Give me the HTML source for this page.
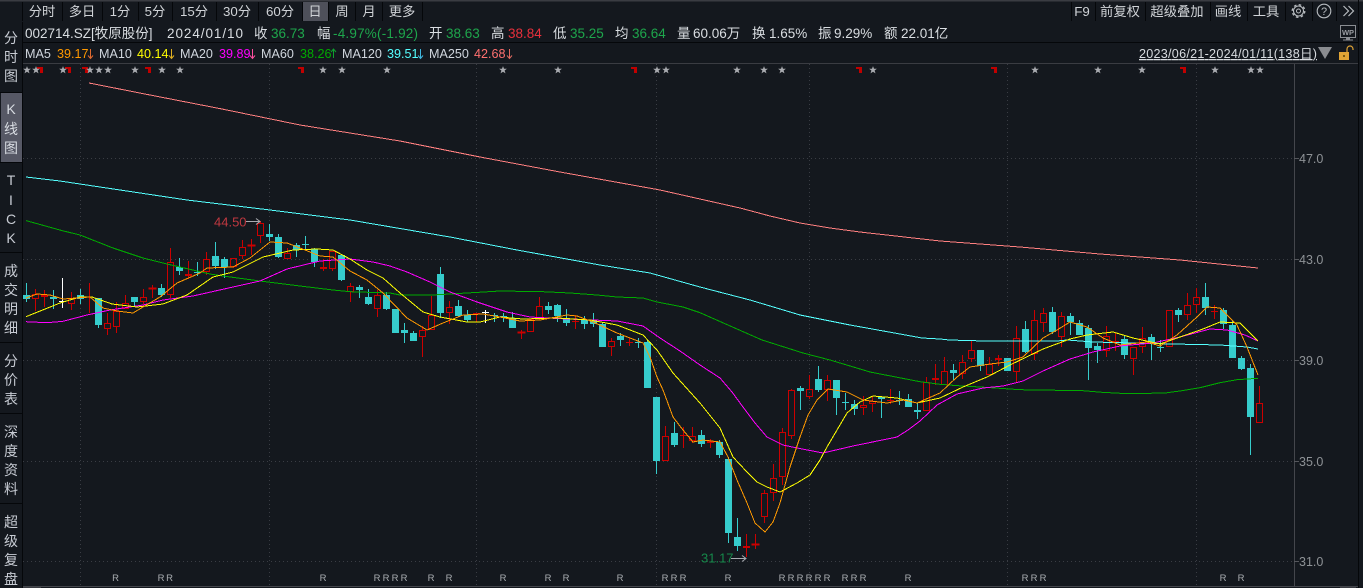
<!DOCTYPE html>
<html lang="zh"><head><meta charset="utf-8"><title>002714.SZ 牧原股份</title>
<style>
html,body{margin:0;padding:0;width:1363px;height:588px;background:#14181e;overflow:hidden}
svg{display:block;font-family:"Liberation Sans","Noto Sans CJK SC",sans-serif}
.t{font-size:13.3px;fill:#d0d3d7;text-anchor:middle}
.i{font-size:13.5px;fill:#dadee2}
.m{font-size:12.6px;fill:#d0d6de}
.g{fill:#1ea64c}.r{fill:#e8303c}
.s{font-size:14px;fill:#c8ccd4;text-anchor:middle}
.R{font-size:9.5px;fill:#a8acb0;text-anchor:middle}
.a{font-size:12.5px;fill:#8e9296}
.l{fill:none;stroke-width:1;shape-rendering:crispEdges}
</style></head><body>
<svg width="1363" height="588" viewBox="0 0 1363 588" xmlns="http://www.w3.org/2000/svg">
<defs>
<polygon id="st" points="0,-3.9 1,-1.2 3.9,-1.2 1.6,.5 2.5,3.4 0,1.7 -2.5,3.4 -1.6,.5 -3.9,-1.2 -1,-1.2" fill="#a9abb0"/>
<path id="co" d="M-3 -3h6v6h-3v-4h-3z" fill="#c00000"/>
</defs>
<rect width="1363" height="588" fill="#14181e"/>

<!-- tab bar -->
<rect x="302" y="2" width="26" height="19" fill="#4e505a"/>
<rect x="0" y="0" width="1363" height="1.5" fill="#3a3c42"/>
<path d="M22.5 2V21M62.5 2V21M102.5 2V21M138.5 2V21M172.5 2V21M216.5 2V21M258.5 2V21M302.5 2V21M328.5 2V21M355.5 2V21M382.5 2V21M422.5 2V21M1071.5 2V21M1095.5 2V21M1145.5 2V21M1210.5 2V21M1247.5 2V21M1285.5 2V21M1312.5 2V21M1336.5 2V21" stroke="#05070a" fill="none"/>
<text class="t" x="42" y="16">分时</text><text class="t" x="82" y="16">多日</text><text class="t" x="120" y="16">1分</text><text class="t" x="155" y="16">5分</text><text class="t" x="194" y="16">15分</text><text class="t" x="237" y="16">30分</text><text class="t" x="280" y="16">60分</text><text class="t" x="315" y="16">日</text><text class="t" x="342" y="16">周</text><text class="t" x="369" y="16">月</text><text class="t" x="402" y="16">更多</text>
<text class="t" x="1082" y="16">F9</text><text class="t" x="1120" y="16">前复权</text><text class="t" x="1177" y="16">超级叠加</text><text class="t" x="1228" y="16">画线</text><text class="t" x="1266" y="16">工具</text>
<!-- gear -->
<circle cx="1298.5" cy="11" r="5" fill="none" stroke="#b8bcc0" stroke-width="1.1"/><circle cx="1298.5" cy="11" r="2" fill="none" stroke="#b8bcc0"/><circle cx="1298.5" cy="11" r="6.3" fill="none" stroke="#b8bcc0" stroke-width="1.3" stroke-dasharray="2.6 2.35"/>
<!-- help -->
<circle cx="1324" cy="11" r="6.8" fill="none" stroke="#b8bcc0" stroke-width="1.1"/><text x="1324" y="15" font-size="11" fill="#b8bcc0" text-anchor="middle">?</text>
<!-- chevrons -->
<path d="M1343.5 6l5 5-5 5M1348.5 6l5 5-5 5" fill="none" stroke="#b8bcc0" stroke-width="1.2"/>
<!-- WP -->
<path d="M1340.5 25.5h15v12h-15z" fill="none" stroke="#8a8d92"/><text x="1348" y="35" font-size="7.5" font-weight="bold" fill="#9a9da2" text-anchor="middle">WP</text><path d="M1346 38h4v1.5h-4zM1343 39.5h10v1h-10z" fill="#8a8d92"/>

<!-- info row -->
<text class="i" x="25" y="38">002714.SZ[牧原股份]</text><text class="i" x="167" y="38" textLength="76" lengthAdjust="spacing">2024/01/10</text>
<text class="i" x="254" y="38">收</text><text class="i g" x="271" y="38">36.73</text>
<text class="i" x="317" y="38">幅</text><text class="i g" x="333" y="38" textLength="85" lengthAdjust="spacing">-4.97%(-1.92)</text>
<text class="i" x="429" y="38">开</text><text class="i g" x="446" y="38">38.63</text>
<text class="i" x="491" y="38">高</text><text class="i r" x="508" y="38">38.84</text>
<text class="i" x="553" y="38">低</text><text class="i g" x="570" y="38">35.25</text>
<text class="i" x="615" y="38">均</text><text class="i g" x="632" y="38">36.64</text>
<text class="i" x="677" y="38">量</text><text class="i" x="693" y="38">60.06万</text>
<text class="i" x="752" y="38">换</text><text class="i" x="769" y="38">1.65%</text>
<text class="i" x="818" y="38">振</text><text class="i" x="834" y="38">9.29%</text>
<text class="i" x="884" y="38">额</text><text class="i" x="901" y="38">22.01亿</text>
<rect x="23" y="42" width="1336" height="1" fill="#05070a"/>

<!-- MA row -->
<text class="m" x="25" y="58">MA5</text><text class="m" x="57" y="58" style="fill:#ff9900">39.17</text>
<text class="m" x="99" y="58">MA10</text><text class="m" x="137" y="58" style="fill:#ffff00">40.14</text>
<text class="m" x="180" y="58">MA20</text><text class="m" x="219" y="58" style="fill:#ff00ff">39.89</text>
<text class="m" x="261" y="58">MA60</text><text class="m" x="300" y="58" style="fill:#00aa00">38.26</text>
<text class="m" x="342" y="58">MA120</text><text class="m" x="387" y="58" style="fill:#55ffff">39.51</text>
<text class="m" x="429" y="58">MA250</text><text class="m" x="474" y="58" style="fill:#ff7070">42.68</text>
<g fill="none" stroke-width="1">
<path d="M90.5 49v9M88 55.5l2.5 3 2.5-3" stroke="#e06a30"/>
<path d="M171.5 49v9M169 55.5l2.5 3 2.5-3" stroke="#e0b020"/>
<path d="M252.5 49v9M250 55.5l2.5 3 2.5-3" stroke="#ff50a0"/>
<path d="M333.5 49v9M331 52l2.5-3 2.5 3" stroke="#10a030"/>
<path d="M420.5 49v9M418 55.5l2.5 3 2.5-3" stroke="#40b8e0"/>
<path d="M509.5 49v9M507 55.5l2.5 3 2.5-3" stroke="#e06a60"/>
</g>
<text class="m" x="1139" y="58" textLength="178" lengthAdjust="spacing" style="fill:#d8dce0;text-decoration:underline">2023/06/21-2024/01/11(138日)</text>
<path d="M1318 47h14l-7 12z" fill="#8a8c90"/>
<rect x="1339" y="52" width="10" height="8" fill="#e0a435"/><rect x="1343" y="55" width="2" height="2" fill="#7a5a10"/>
<path d="M1347 52v-3a3 3 0 0 1 6 0v1" fill="none" stroke="#e0a435" stroke-width="1.2"/>
<rect x="23" y="63" width="1336" height="1" fill="#3a3c42"/>

<!-- sidebar -->
<rect x="0" y="22" width="22" height="566" fill="#14181e"/>
<rect x="1" y="92" width="21" height="70" fill="#565865"/>
<rect x="22" y="22" width="1" height="566" fill="#05070a"/>
<path d="M0 92.5h22M0 162.5h22M0 252.5h22M0 342.5h22M0 413.5h22M0 503.5h22" stroke="#05070a"/>
<g>
<text class="s" x="11" y="43">分</text><text class="s" x="11" y="62">时</text><text class="s" x="11" y="81">图</text>
<text class="s" x="11" y="114" style="fill:#d8dce2">K</text><text class="s" x="11" y="134" style="fill:#d8dce2">线</text><text class="s" x="11" y="153" style="fill:#d8dce2">图</text>
<text class="s" x="11" y="185">T</text><text class="s" x="11" y="205">I</text><text class="s" x="11" y="224">C</text><text class="s" x="11" y="243">K</text>
<text class="s" x="11" y="276">成</text><text class="s" x="11" y="295">交</text><text class="s" x="11" y="314">明</text><text class="s" x="11" y="333">细</text>
<text class="s" x="11" y="366">分</text><text class="s" x="11" y="385">价</text><text class="s" x="11" y="404">表</text>
<text class="s" x="11" y="437">深</text><text class="s" x="11" y="456">度</text><text class="s" x="11" y="475">资</text><text class="s" x="11" y="494">料</text>
<text class="s" x="11" y="527">超</text><text class="s" x="11" y="546">级</text><text class="s" x="11" y="565">复</text><text class="s" x="11" y="584">盘</text>
</g>

<!-- grid -->
<path d="M23 158.5H1294M23 259.5H1294M23 360.5H1294M23 461.5H1294M23 561.5H1294M80.5 64V586M269.5 64V586M476.5 64V586M656.5 64V586M809.5 64V586M1007.5 64V586M1196.5 64V586" stroke="#3a3d44" stroke-dasharray="1 3" fill="none" shape-rendering="crispEdges"/>
<rect x="1294" y="64" width="1" height="522" fill="#44464c"/>
<rect x="23" y="586" width="1336" height="1" fill="#44464c"/>
<rect x="23" y="587" width="18" height="1" fill="#3a3c42"/><rect x="1340" y="587" width="16" height="1" fill="#3a3c42"/>
<rect x="1358" y="0" width="1" height="588" fill="#05070a"/>
<path d="M1294 158.5h5M1294 259.5h5M1294 360.5h5M1294 461.5h5M1294 561.5h5" stroke="#55575c"/>
<text class="a" x="1299" y="163">47.0</text><text class="a" x="1299" y="264">43.0</text><text class="a" x="1299" y="365">39.0</text><text class="a" x="1299" y="466">35.0</text><text class="a" x="1299" y="566">31.0</text>

<!-- corners -->
<use href="#co" x="40" y="70"/><use href="#co" x="68" y="70"/><use href="#co" x="85" y="70"/><use href="#co" x="148" y="70"/><use href="#co" x="301" y="70"/><use href="#co" x="634" y="70"/><use href="#co" x="859" y="70"/><use href="#co" x="994" y="70"/><use href="#co" x="1183" y="70"/>
<!-- stars -->
<use href="#st" x="27" y="70"/><use href="#st" x="36" y="70"/><use href="#st" x="63" y="70"/><use href="#st" x="90" y="70"/><use href="#st" x="99" y="70"/><use href="#st" x="108" y="70"/><use href="#st" x="135" y="70"/><use href="#st" x="162" y="70"/><use href="#st" x="180" y="70"/><use href="#st" x="323" y="70"/><use href="#st" x="342" y="70"/><use href="#st" x="387" y="70"/><use href="#st" x="503" y="70"/><use href="#st" x="558" y="70"/><use href="#st" x="657" y="70"/><use href="#st" x="666" y="70"/><use href="#st" x="737" y="70"/><use href="#st" x="764" y="70"/><use href="#st" x="782" y="70"/><use href="#st" x="873" y="70"/><use href="#st" x="1035" y="70"/><use href="#st" x="1098" y="70"/><use href="#st" x="1142" y="70"/><use href="#st" x="1215" y="70"/><use href="#st" x="1251" y="70"/><use href="#st" x="1260" y="70"/>

<!-- R row -->
<g>
<text class="R" x="115.5" y="581">R</text><text class="R" x="161" y="581">R</text><text class="R" x="169.5" y="581">R</text><text class="R" x="323" y="581">R</text><text class="R" x="377" y="581">R</text><text class="R" x="386" y="581">R</text><text class="R" x="395" y="581">R</text><text class="R" x="404" y="581">R</text><text class="R" x="431" y="581">R</text><text class="R" x="449" y="581">R</text><text class="R" x="503" y="581">R</text><text class="R" x="548" y="581">R</text><text class="R" x="566" y="581">R</text><text class="R" x="620" y="581">R</text><text class="R" x="665" y="581">R</text><text class="R" x="674" y="581">R</text><text class="R" x="683" y="581">R</text><text class="R" x="728" y="581">R</text><text class="R" x="782" y="581">R</text><text class="R" x="791" y="581">R</text><text class="R" x="800" y="581">R</text><text class="R" x="809" y="581">R</text><text class="R" x="818" y="581">R</text><text class="R" x="827" y="581">R</text><text class="R" x="845" y="581">R</text><text class="R" x="854" y="581">R</text><text class="R" x="863" y="581">R</text><text class="R" x="908" y="581">R</text><text class="R" x="1025" y="581">R</text><text class="R" x="1034" y="581">R</text><text class="R" x="1043" y="581">R</text><text class="R" x="1223" y="581">R</text><text class="R" x="1241" y="581">R</text>
</g>

<!-- cyan candles -->
<path shape-rendering="crispEdges" fill="#36cccc" stroke="#36cccc" d="M26.5 283V302M23.5 295.5h6V298.5h-6zM53.5 290V309M50.5 297.5h6V298.5h-6zM80.5 289V304M77.5 295.5h6V298.5h-6zM98.5 298V328M95.5 298.5h6V324.5h-6zM134.5 297V307M131.5 297.5h6V301.5h-6zM161.5 284V297M158.5 288.5h6V294.5h-6zM179.5 258V275M176.5 267.5h6V270.5h-6zM197.5 262V276M194 272.5h7M215.5 242V269M212.5 256.5h6V265.5h-6zM224.5 257V278M221.5 259.5h6V266.5h-6zM269.5 224V241M266.5 234.5h6V236.5h-6zM278.5 234V258M275.5 237.5h6V256.5h-6zM296.5 243V257M293.5 245.5h6V249.5h-6zM305.5 236V249M302 244.5h7M314.5 248V267M311.5 249.5h6V261.5h-6zM341.5 255V281M338.5 255.5h6V279.5h-6zM359.5 285V298M356.5 287.5h6V289.5h-6zM368.5 289V305M365.5 297.5h6V303.5h-6zM386.5 292V310M383.5 295.5h6V308.5h-6zM395.5 309V333M392.5 309.5h6V332.5h-6zM404.5 323V343M401.5 330.5h6V332.5h-6zM413.5 331V341M410.5 333.5h6V340.5h-6zM440.5 267V318M437.5 274.5h6V312.5h-6zM458.5 300V317M455.5 306.5h6V315.5h-6zM467.5 310V322M464.5 315.5h6V319.5h-6zM494.5 313V322M491 315.5h7M503.5 313V322M500 316.5h7M512.5 312V328M509.5 318.5h6V327.5h-6zM548.5 302V314M545.5 306.5h6V309.5h-6zM557.5 304V322M554.5 305.5h6V315.5h-6zM566.5 309V326M563.5 318.5h6V322.5h-6zM584.5 316V329M581.5 320.5h6V323.5h-6zM593.5 313V327M590.5 321.5h6V323.5h-6zM602.5 322V347M599.5 324.5h6V346.5h-6zM620.5 333V346M617.5 336.5h6V339.5h-6zM638.5 338V348M635 342.5h7M647.5 340V388M644.5 342.5h6V387.5h-6zM656.5 397V474M653.5 397.5h6V460.5h-6zM674.5 422V447M671.5 433.5h6V444.5h-6zM701.5 430V447M698.5 435.5h6V443.5h-6zM719.5 440V458M716.5 442.5h6V454.5h-6zM728.5 457V543M725.5 459.5h6V532.5h-6zM737.5 518V551M734.5 537.5h6V545.5h-6zM800.5 386V410M797.5 388.5h6V390.5h-6zM818.5 366V392M815.5 379.5h6V389.5h-6zM836.5 380V415M833.5 380.5h6V397.5h-6zM845.5 393V410M842 402.5h7M854.5 400V415M851.5 404.5h6V408.5h-6zM881.5 396V418M878.5 397.5h6V398.5h-6zM899.5 391V405M896 400.5h7M908.5 394V407M905.5 399.5h6V406.5h-6zM917.5 403V419M914.5 410.5h6V411.5h-6zM953.5 364V380M950.5 370.5h6V372.5h-6zM980.5 350V371M977.5 350.5h6V365.5h-6zM1007.5 358V371M1004.5 358.5h6V370.5h-6zM1025.5 321V353M1022.5 329.5h6V351.5h-6zM1052.5 307V334M1049.5 312.5h6V331.5h-6zM1070.5 313V335M1067.5 316.5h6V321.5h-6zM1079.5 320V335M1076.5 323.5h6V334.5h-6zM1088.5 325V380M1085.5 328.5h6V347.5h-6zM1097.5 343V363M1094.5 346.5h6V349.5h-6zM1124.5 336V359M1121.5 339.5h6V354.5h-6zM1151.5 334V360M1148.5 337.5h6V341.5h-6zM1160.5 340V352M1157 347.5h7M1178.5 308V322M1175.5 310.5h6V314.5h-6zM1205.5 283V315M1202.5 297.5h6V307.5h-6zM1223.5 308V329M1220.5 310.5h6V323.5h-6zM1232.5 320V358M1229.5 325.5h6V357.5h-6zM1241.5 356V370M1238.5 358.5h6V368.5h-6zM1250.5 364V455M1247.5 368.5h6V416.5h-6z"/>

<!-- red candles -->
<path shape-rendering="crispEdges" fill="none" stroke="#cc0000" d="M35.5 289V294M35.5 299V311M32.5 294.5h6V298.5h-6zM44.5 290V295M44.5 297V307M41.5 295.5h6V296.5h-6zM71.5 292V298M71.5 304V310M68.5 298.5h6V303.5h-6zM89.5 283V313M107.5 313V323M107.5 329V335M104.5 323.5h6V328.5h-6zM116.5 302V311M116.5 327V333M113.5 311.5h6V326.5h-6zM125.5 295V303M122.5 303.5h6V308.5h-6zM143.5 289V297M143.5 302V304M140.5 297.5h6V301.5h-6zM152.5 285V298M149 288h7v1h-7zM170.5 248V262M170.5 295V298M167.5 262.5h6V294.5h-6zM188.5 261V274M188.5 276V279M185.5 274.5h6V275.5h-6zM206.5 252V259M206.5 272V275M203.5 259.5h6V271.5h-6zM233.5 267V268M230.5 258.5h6V266.5h-6zM242.5 240V247M242.5 256V259M239.5 247.5h6V255.5h-6zM251.5 239V255M248 245h7v1h-7zM260.5 221V223M260.5 236V243M257.5 223.5h6V235.5h-6zM287.5 248V253M284.5 253.5h6V258.5h-6zM323.5 259V267M323.5 269V271M320.5 267.5h6V268.5h-6zM332.5 269V271M329.5 251.5h6V268.5h-6zM350.5 283V286M350.5 292V302M347.5 286.5h6V291.5h-6zM377.5 290V295M377.5 309V317M374.5 295.5h6V308.5h-6zM422.5 326V330M422.5 337V357M419.5 330.5h6V336.5h-6zM431.5 296V315M428.5 315.5h6V329.5h-6zM449.5 301V307M449.5 313V324M446.5 307.5h6V312.5h-6zM476.5 313V322M473 313.5h7M521.5 330V339M518 332h7v1h-7zM527.5 319.5h6V331.5h-6zM539.5 297V306M539.5 318V320M536.5 306.5h6V317.5h-6zM575.5 315V329M572 321.5h7M611.5 338V341M611.5 347V356M608.5 341.5h6V346.5h-6zM629.5 338V346M626 342.5h7M665.5 426V436M662.5 436.5h6V460.5h-6zM683.5 427V448M680 435.5h7M692.5 427V436M692.5 441V443M689.5 436.5h6V440.5h-6zM710.5 439V441M710.5 443V448M707.5 441.5h6V442.5h-6zM746.5 534V546M746.5 548V557M743.5 546.5h6V547.5h-6zM755.5 534V549M752 544h7v1h-7zM764.5 490V493M764.5 517V523M761.5 493.5h6V516.5h-6zM773.5 464V478M773.5 493V501M770.5 478.5h6V492.5h-6zM782.5 428V432M782.5 477V485M779.5 432.5h6V476.5h-6zM791.5 389V390M791.5 436V439M788.5 390.5h6V435.5h-6zM809.5 375V389M809.5 397V399M806.5 389.5h6V396.5h-6zM827.5 375V380M827.5 390V401M824.5 380.5h6V389.5h-6zM863.5 396V405M863.5 408V415M860.5 405.5h6V407.5h-6zM872.5 396V401M872.5 404V412M869.5 401.5h6V403.5h-6zM890.5 389V404M887 400.5h7M926.5 377V382M923.5 382.5h6V410.5h-6zM935.5 364V378M935.5 380V385M932.5 378.5h6V379.5h-6zM944.5 357V371M941.5 371.5h6V384.5h-6zM962.5 355V362M962.5 374V379M959.5 362.5h6V373.5h-6zM971.5 341V350M971.5 359V362M968.5 350.5h6V358.5h-6zM989.5 357V364M986.5 364.5h6V374.5h-6zM998.5 355V358M998.5 360V366M995.5 358.5h6V359.5h-6zM1016.5 326V338M1016.5 372V382M1013.5 338.5h6V371.5h-6zM1034.5 310V320M1034.5 354V360M1031.5 320.5h6V353.5h-6zM1043.5 308V313M1043.5 323V332M1040.5 313.5h6V322.5h-6zM1061.5 312V316M1061.5 337V347M1058.5 316.5h6V336.5h-6zM1106.5 326V336M1106.5 351V357M1103.5 336.5h6V350.5h-6zM1115.5 333V351M1112 341.5h7M1133.5 359V375M1130.5 347.5h6V358.5h-6zM1142.5 327V338M1142.5 347V353M1139.5 338.5h6V346.5h-6zM1166.5 310.5h6V346.5h-6zM1187.5 293V305M1187.5 315V320M1184.5 305.5h6V314.5h-6zM1196.5 288V297M1196.5 305V313M1193.5 297.5h6V304.5h-6zM1214.5 305V319M1211 311.5h7M1259.5 386V403M1256.5 403.5h6V422.5h-6z"/>
<path shape-rendering="crispEdges" fill="none" stroke="#ffffff" d="M62.5 278V308M59 301.5h7M485.5 310V323M482 312.5h7"/>

<!-- MA250 -->
<polyline class="l" stroke="#ff8080" points="89,83 150,95 222,109 300,125 400,141 480,157 560,172 660,190 740,208 770,216 800,223 830,228 860,232 940,241 1020,247 1100,254 1180,260 1258,268"/>
<!-- MA120 -->
<polyline class="l" stroke="#55ffff" points="26,177 60,181 100,187 187,200 270,210 350,220 450,237 517,250 600,265 650,273 700,287 750,300 800,315 850,325 900,334 922,338 940,339 949,340 985,341 1057,341 1067,340 1093,342 1173,344 1220,345 1247,347 1258,349"/>
<!-- MA60 -->
<polyline class="l" stroke="#00aa00" points="26,220.6 62,230.6 80,235 113,248 143,258 167,264 210,274 223,276 260,281 300,286 333,290 350,291.7 390,293 400,295 433,295 472,292.7 500,291 543,291.7 570,293 597,295 617,297 643,298 657,302 683,307 700,312.7 762,340 803,353 830,360 870,372 920,381.7 940,384.3 958,385.7 985,387.3 1020,389.7 1083,390.7 1102,392.3 1128,393.7 1165,393 1182,390.7 1200,387.7 1220,382.7 1237,379.7 1258,378.3"/>
<!-- MA20 -->
<polyline class="l" stroke="#ff00ff" points="26,321.7 47,322.7 63,321.3 87,315 110,310 143,305 163,300 193,296 233,287 260,281 287,269 320,261 350,259 373,262 390,266 407,272 430,282 450,292 477,302 507,312 530,317 567,319 617,321 643,326 660,338 680,351 700,365 720,378 732,392 743,407 755,423 767,437 783,445 797,448 823,453 853,446 897,437 908,430 920,421 937,405 957,394 983,388 1003,386 1023,381 1043,371 1070,359 1093,352 1120,346 1153,343 1180,337 1210,329 1227,330 1245,335 1258,341"/>
<!-- MA10 -->
<polyline class="l" stroke="#ffff00" points="26,316.7 60,303 80,297 92,297 112,304 137,307 163,304 187,295 213,277 233,272 263,257 293,250 317,249 333,250 350,259 367,270 383,278 400,293 423,312 440,317 467,322 480,322 500,317 523,319 557,318 590,320 617,325 643,335 657,350 673,373 700,403 720,428 733,457 747,472 757,482 767,487 780,492 797,483 810,475 820,460 827,447 837,430 847,413 860,402 873,396 897,398 917,403 940,398 963,387 987,377 1010,365 1043,349 1070,339 1087,335 1113,332 1133,338 1160,344 1180,337 1203,329 1220,322 1240,323 1258,341"/>
<!-- MA5 -->
<polyline class="l" stroke="#ff9900" points="26,298 37,294 50,295 63,299 90,297 103,308 117,311 133,313 143,307 160,297 177,283 200,273 207,268 233,267 250,258 270,242 287,243 300,248 320,256 333,257 350,271 367,280 383,293 407,318 427,330 443,323 463,315 483,314 500,317 520,321 540,320 567,315 577,316 593,322 617,333 643,343 650,357 657,377 663,390 673,417 683,430 693,442 703,440 720,442 728,457 737,480 747,503 755,523 765,532 773,522 780,503 790,467 800,437 808,415 817,400 828,389 847,392 863,400 887,403 903,400 917,403 940,393 957,377 970,367 990,364 1007,362 1023,357 1043,338 1057,330 1070,322 1087,327 1103,338 1120,345 1147,342 1160,346 1177,335 1197,317 1207,307 1220,308 1237,325 1247,347 1258,375"/>

<!-- annotations -->
<text x="214" y="226.5" font-size="13" fill="#c03840">44.50</text>
<path d="M246 221.5h14M256 218.5l4 3-4 3" stroke="#a8aab0" fill="none"/>
<text x="701" y="562.5" font-size="13" fill="#16884a">31.17</text>
<path d="M731 558.5h15M742 555.5l4 3-4 3" stroke="#a8aab0" fill="none"/>
</svg>
</body></html>
